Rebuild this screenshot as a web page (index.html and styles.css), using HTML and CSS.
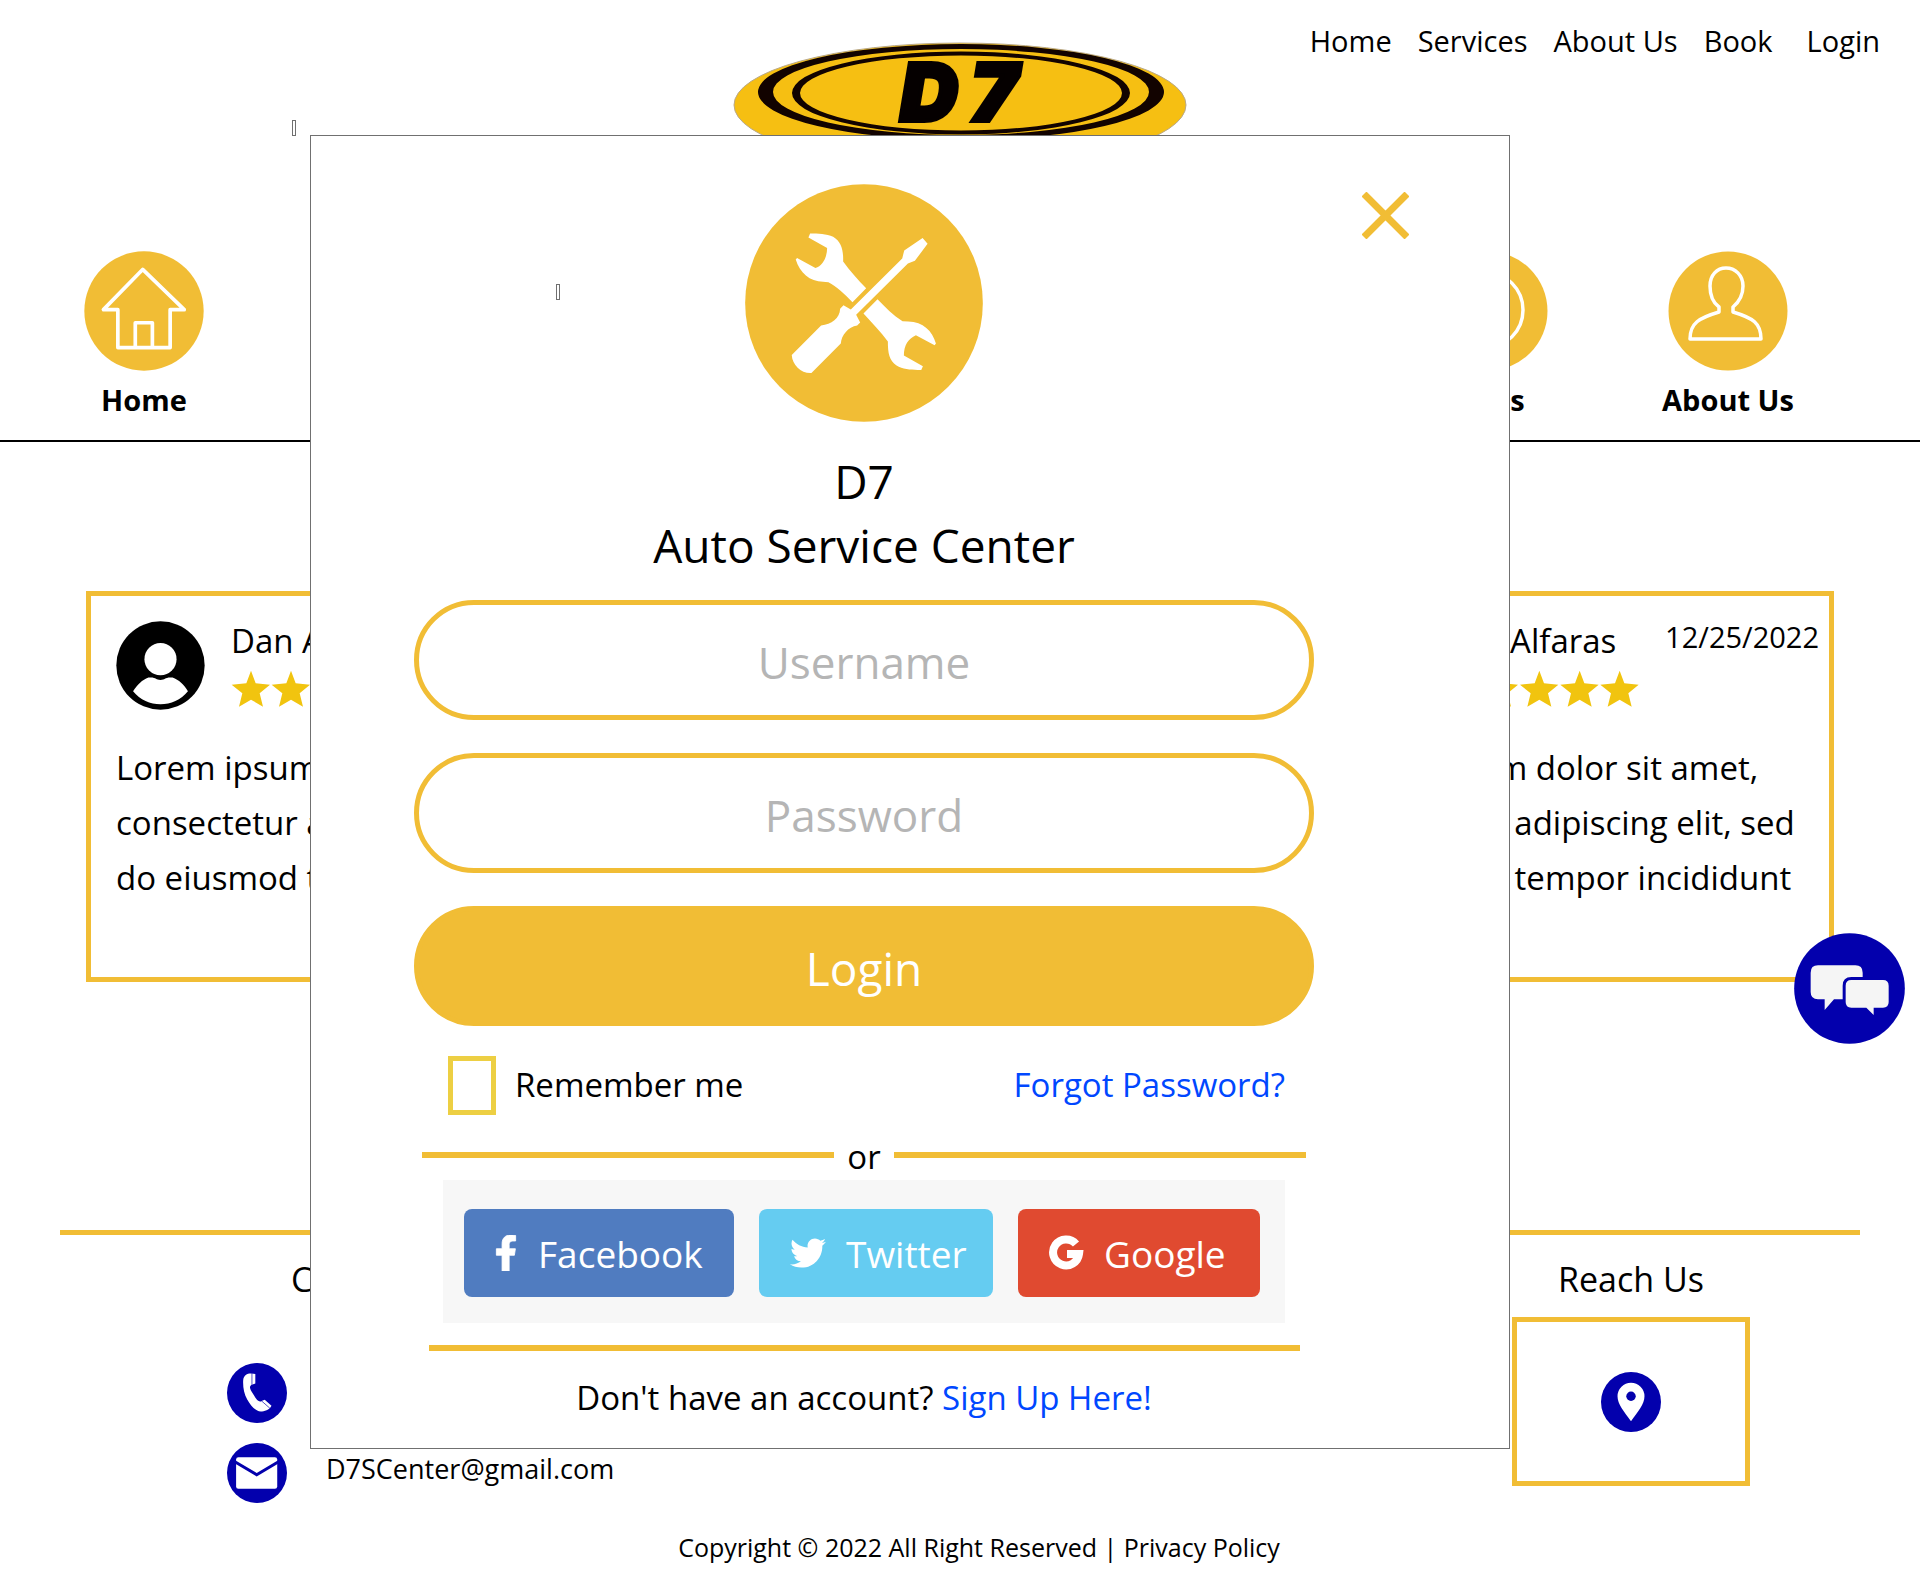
FILE: index.html
```html
<!DOCTYPE html>
<html lang="en">
<head>
<meta charset="utf-8">
<meta name="viewport" content="width=device-width, initial-scale=1">
<title>D7 Auto Service Center</title>
<link rel="stylesheet" href="styles.css">
</head>
<body>
<header class="site-header">
  <svg class="logo" viewBox="735 42 454 126" role="img" aria-label="D7">
    <ellipse cx="962" cy="105" rx="226" ry="62" fill="#f6bf12" stroke="#b9a98a" stroke-width="1"/>
    <path fill="#120300" fill-rule="evenodd" d="M760 92a203 48 0 1 0 406 0a203 48 0 1 0 -406 0ZM775 92a188 43 0 1 0 376 0a188 43 0 1 0 -376 0Z"/>
    <path fill="#120300" fill-rule="evenodd" d="M794 93a169 41.500 0 1 0 338 0a169 41.500 0 1 0 -338 0ZM802 93a161 37.500 0 1 0 322 0a161 37.500 0 1 0 -322 0Z"/>
    <text class="logo-text" y="121"><tspan x="902">D</tspan><tspan x="972">7</tspan></text>
  </svg>
  <nav class="top-nav" aria-label="Main">
    <a href="#home">Home</a>
    <a href="#services">Services</a>
    <a href="#about">About Us</a>
    <a href="#book">Book</a>
    <a class="nav-login" href="#login">Login</a>
  </nav>
</header>
<span class="marker marker-page"></span>

<nav class="quick-links" aria-label="Quick links">
  <a class="quick-link quick-home" href="#home">
    <svg class="quick-icon" viewBox="253 92 358 358" aria-hidden="true">
      <circle cx="432" cy="271" r="178" fill="#f1bd35"/>
      <path d="M428 147L311 267H354V380H510V267H552ZM406 380V306H457V380" fill="none" stroke="#fff" stroke-width="11" stroke-linejoin="round"/>
    </svg>
    <span>Home</span>
  </a>
  <a class="quick-link" href="#faqs">
    <svg class="quick-icon" viewBox="0 0 120 120" aria-hidden="true">
      <circle cx="60" cy="60" r="59.500" fill="#f1bd35"/>
      <circle cx="57" cy="59" r="38" fill="none" stroke="#fff" stroke-width="3.500"/>
    </svg>
    <span>FAQs</span>
  </a>
  <a class="quick-link" href="#about">
    <svg class="quick-icon" viewBox="0 0 120 120" aria-hidden="true">
      <circle cx="60" cy="60" r="59.500" fill="#f1bd35"/>
      <path d="M51 61V56C44 51 42 44 42 35C42 24 49 17 58 17S75 24 75 35C75 44 71 51 65 56V61C85 67 93 72 93 88H22C22 72 31 67 51 61Z" fill="none" stroke="#fff" stroke-width="3.500" stroke-linejoin="round"/>
    </svg>
    <span>About Us</span>
  </a>
</nav>

<svg class="symbols" aria-hidden="true">
  <symbol id="avatar" viewBox="167 184 266 266">
    <circle cx="300" cy="317" r="132" fill="#000"/>
    <circle cx="300" cy="298" r="48" fill="#fff"/>
    <path d="M218 394C232 374 245 360 264 353C288 351 285 360 300 360C315 360 312 351 336 353C355 360 370 374 382 394C340 446 260 446 218 394Z" fill="#fff"/>
  </symbol>
  <symbol id="stars" viewBox="0 0 600 111">
    <g fill="#f1c40f">
      <path id="star" d="M60 2L74 40L117 44L86 70L96 110L60 89L24 110L34 70L2 44L46 40Z"/>
      <use href="#star" x="120"/><use href="#star" x="241"/><use href="#star" x="362"/><use href="#star" x="482"/>
    </g>
  </symbol>
</svg>

<main class="reviews">
  <article class="review">
    <div class="review-head">
      <svg class="avatar" aria-hidden="true"><use href="#avatar"/></svg>
      <div class="review-author">
        <h2>Dan Alfaras</h2>
        <svg class="stars" role="img" aria-label="5 stars"><use href="#stars"/></svg>
      </div>
      <time datetime="2022-12-25">12/25/2022</time>
    </div>
    <p>Lorem ipsum dolor sit amet, consectetur adipiscing elit, sed do eiusmod tempor incididunt</p>
  </article>
  <article class="review">
    <div class="review-head">
      <svg class="avatar" aria-hidden="true"><use href="#avatar"/></svg>
      <div class="review-author">
        <h2>Dan Alfaras</h2>
        <svg class="stars" role="img" aria-label="5 stars"><use href="#stars"/></svg>
      </div>
      <time datetime="2022-12-25">12/25/2022</time>
    </div>
    <p>Lorem ipsum dolor sit amet, consectetur adipiscing elit, sed do eiusmod tempor incididunt</p>
  </article>
  <article class="review">
    <div class="review-head">
      <svg class="avatar" aria-hidden="true"><use href="#avatar"/></svg>
      <div class="review-author">
        <h2>Dan Alfaras</h2>
        <svg class="stars" role="img" aria-label="5 stars"><use href="#stars"/></svg>
      </div>
      <time datetime="2022-12-25">12/25/2022</time>
    </div>
    <p>Lorem ipsum dolor sit amet, consectetur adipiscing elit, sed do eiusmod tempor incididunt</p>
  </article>
</main>

<footer class="site-footer">
  <div class="footer-columns">
    <section class="contact">
      <h2>Contact Us</h2>
      <a class="contact-row" href="#phone" aria-label="Phone">
        <svg viewBox="80 429 178 178" aria-hidden="true">
          <circle cx="169" cy="518" r="89" fill="#0300ad"/>
          <path d="M128 480C129 464 142 459 153 460L164 462V490L152 494C145 499 148 506 158 522C168 540 176 548 184 541L192 538L212 556C206 569 190 573 180 573C165 572 150 555 140 537C130 520 127 500 128 480Z" fill="#fff"/>
          <path d="M154 459V494M182 541L207 563" stroke="#0300ad" stroke-width="2"/>
        </svg>
      </a>
      <a class="contact-row" href="mailto:D7SCenter@gmail.com">
        <svg viewBox="80 669 178 178" aria-hidden="true">
          <circle cx="169" cy="758" r="89" fill="#0300ad"/>
          <rect x="107" y="711" width="122" height="94" rx="7" fill="#fff"/>
          <path d="M102 724L168 763L234 724" fill="none" stroke="#0300ad" stroke-width="9"/>
        </svg>
        <span>D7SCenter@gmail.com</span>
      </a>
    </section>
    <section class="reach">
      <h2>Reach Us</h2>
      <a class="map" href="#map" aria-label="Map">
        <svg viewBox="366 486 178 178" aria-hidden="true">
          <circle cx="455" cy="575" r="89" fill="#0300ad"/>
          <path d="M455 632C435 604 415 582 415 558A40 40 0 0 1 495 558C495 582 475 604 455 632Z" fill="#fff"/>
          <circle cx="455" cy="558" r="14" fill="#0300ad"/>
        </svg>
      </a>
    </section>
  </div>
  <p class="copyright">Copyright © 2022 All Right Reserved | <a href="#privacy">Privacy Policy</a></p>
</footer>

<button class="chat" type="button" aria-label="Chat">
  <svg viewBox="943 1119 333 333" aria-hidden="true">
    <circle cx="1109.500" cy="1285.500" r="166" fill="#0300ad"/>
    <path d="M1015 1216H1127Q1149 1216 1149 1238V1318H1063L1035 1350V1318H1015Q993 1318 993 1296V1238Q993 1216 1015 1216Z" fill="#f5f5f5"/>
    <path d="M1115 1260H1210Q1227 1260 1227 1277V1326Q1227 1343 1210 1343H1182V1365L1160 1343H1115Q1098 1343 1098 1326V1277Q1098 1260 1115 1260Z" fill="#f5f5f5" stroke="#0300ad" stroke-width="18" paint-order="stroke"/>
  </svg>
</button>

<div class="modal" role="dialog" aria-labelledby="login-title">
  <button class="close" type="button" aria-label="Close">
    <svg viewBox="0 0 47 47" aria-hidden="true"><path d="M2 2L45 45M45 2L2 45" stroke="#f1bd35" stroke-width="7"/></svg>
  </button>
  <span class="marker marker-modal"></span>
  <form class="login">
    <svg class="tools" viewBox="136 492 713 713" aria-hidden="true">
      <circle cx="492.500" cy="848.500" r="356" fill="#f1bd35"/>
      <g fill="#fff">
        <path d="M331 640L326 652L382 684C382 712 368 738 347 744L292 714L288 718C300 758 330 784 370 785L386 786C410 798 435 822 458 846L499 804C475 780 450 752 430 724C431 690 425 665 400 650C380 641 355 640 331 640Z"/>
        <path d="M668 654L683 671L645 722L624 730L469 884L481 907L472 916C445 920 425 945 423 970L335 1058C305 1060 278 1035 276 1004L364 916C395 912 420 895 421 866L431 855L453 868L607 715L613 691Z"/>
        <path d="M533 837L491 880C515 906 543 935 564 964C564 1000 568 1020 590 1036C610 1048 640 1050 664 1049L669 1038L612 1006C612 975 625 955 648 945L704 975L708 970C697 932 670 905 625 904L608 903C580 885 555 860 533 837Z"/>
      </g>
    </svg>
    <h1 id="login-title">D7<br>Auto Service Center</h1>
    <div class="fields">
      <input class="field" type="text" placeholder="Username" aria-label="Username">
      <input class="field" type="password" placeholder="Password" aria-label="Password">
      <button class="submit" type="submit">Login</button>
    </div>
    <div class="options">
      <input class="remember" type="checkbox" id="remember">
      <label for="remember">Remember me</label>
      <a class="forgot" href="#forgot">Forgot Password?</a>
    </div>
    <div class="divider"><span>or</span></div>
    <div class="social">
      <button class="social-btn facebook" type="button">
        <svg viewBox="22 0 276 512" aria-hidden="true"><path fill="#fff" stroke="#fff" stroke-width="12" d="M279.140 288l14.220-92.660h-88.910v-60.130c0-25.350 12.420-50.060 52.240-50.060h40.420V6.260S260.430 0 225.360 0c-73.220 0-121.080 44.380-121.080 124.720v70.620H22.890V288h81.390v224h100.170V288z"/></svg>
        Facebook
      </button>
      <button class="social-btn twitter" type="button">
        <svg viewBox="0 0 512 512" aria-hidden="true"><path fill="#fff" d="M459.370 151.716c.325 4.548.325 9.097.325 13.645 0 138.720-105.583 298.558-298.558 298.558-59.452 0-114.680-17.219-161.137-47.106 8.447.974 16.568 1.299 25.340 1.299 49.055 0 94.213-16.568 130.274-44.832-46.132-.975-84.792-31.188-98.112-72.772 6.498.974 12.995 1.624 19.818 1.624 9.421 0 18.843-1.300 27.614-3.573-48.081-9.747-84.143-51.980-84.143-102.985v-1.299c13.969 7.797 30.214 12.670 47.431 13.319-28.264-18.843-46.781-51.005-46.781-87.391 0-19.492 5.197-37.360 14.294-52.954 51.655 63.675 129.300 105.258 216.365 109.807-1.624-7.797-2.599-15.918-2.599-24.040 0-57.828 46.782-104.934 104.934-104.934 30.213 0 57.502 12.670 76.670 33.137 23.715-4.548 46.456-13.320 66.599-25.340-7.798 24.366-24.366 44.833-46.132 57.827 21.117-2.273 41.584-8.122 60.426-16.243-14.292 20.791-32.161 39.308-52.628 54.253z"/></svg>
        Twitter
      </button>
      <button class="social-btn google" type="button">
        <svg viewBox="0 0 35 35" aria-hidden="true"><path fill="none" stroke="#fff" stroke-width="8" d="M27 8.500A13 13 0 1 0 30 18.500H18"/></svg>
        Google
      </button>
    </div>
    <hr class="rule">
    <p class="signup">Don't have an account? <a href="#signup">Sign Up Here!</a></p>
  </form>
</div>
</body>
</html>
```
FILE: styles.css
```css
* {
  box-sizing: border-box;
}

body {
  position: relative;
  margin: 0;
  background: #fff;
  color: #000;
  font-family: "Open Sans", "Noto Sans", sans-serif;
  font-size: 29px;
}

a {
  color: inherit;
  text-decoration: none;
}

h1,
h2,
p {
  margin: 0;
  font-weight: 400;
}

button,
input {
  font-family: inherit;
}

svg {
  display: block;
}

.symbols {
  position: absolute;
  width: 0;
  height: 0;
}

.site-header {
  display: grid;
  padding-bottom: 83px;
}

.logo {
  grid-area: 1 / 1;
  justify-self: center;
  width: 454px;
  height: 126px;
  margin-top: 42px;
}

.logo-text {
  fill: #050000;
  stroke: #050000;
  stroke-width: 4px;
  font-family: Inter, sans-serif;
  font-size: 80px;
  font-style: italic;
  font-weight: 900;
}

.top-nav {
  grid-area: 1 / 1;
  justify-self: end;
  align-self: start;
  display: flex;
  gap: 26px;
  padding: 21px 40px 0 0;
  line-height: 40px;
}

.nav-login {
  margin-left: 8px;
}

/* Small empty glyph boxes left on the page and in the dialog */
.marker {
  position: absolute;
  width: 4px;
  height: 16px;
  border: 1px solid #707070;
}

.marker-page {
  top: 120px;
  left: 292px;
}

.marker-modal {
  top: 148px;
  left: 245px;
}

.quick-links {
  display: flex;
  gap: 104px;
  padding: 0 124px 20px 76px;
  border-bottom: 2px solid #000;
}

.quick-link {
  display: flex;
  flex-direction: column;
  align-items: center;
  gap: 9px;
  width: 136px;
  font-weight: 700;
  line-height: 40px;
  white-space: nowrap;
}

.quick-home {
  margin-right: auto;
}

.quick-icon {
  width: 120px;
  height: 120px;
}

.reviews {
  display: grid;
  grid-template-columns: repeat(3, 1fr);
  gap: 64px;
  padding: 149px 86px 0;
}

.review {
  padding: 20px 10px 72px 25px;
  border: 5px solid #f1bd35;
}

.review-head {
  display: flex;
}

.avatar {
  flex: none;
  width: 89px;
  height: 89px;
  margin-top: 5px;
}

.review-author {
  flex: 1;
  padding-left: 26px;
}

.review-author h2 {
  font-size: 33px;
  line-height: 50px;
}

.stars {
  width: 200px;
  height: 37px;
  margin-top: 4px;
}

.review-head time {
  line-height: 42px;
}

.review p {
  margin-top: 30px;
  font-size: 33px;
  line-height: 55px;
}

.site-footer {
  margin: 248px 60px 0;
  border-top: 5px solid #f1bd35;
}

.footer-columns {
  display: flex;
  justify-content: space-between;
  padding: 22px 110px 0 167px;
}

.footer-columns h2 {
  font-size: 34px;
  line-height: 44px;
}

.contact {
  display: flex;
  flex-direction: column;
  gap: 20px;
}

.contact h2 {
  margin-bottom: 42px;
  padding-left: 64px;
}

.contact-row {
  display: flex;
  gap: 39px;
  font-size: 27px;
  line-height: 52px;
}

.contact-row svg,
.map svg {
  width: 60px;
  height: 60px;
}

.reach {
  text-align: center;
}

.map {
  display: flex;
  align-items: center;
  justify-content: center;
  width: 238px;
  height: 169px;
  margin-top: 16px;
  border: 5px solid #f1bd35;
}

.copyright {
  padding: 27px 0 20px 38px;
  font-size: 25px;
  line-height: 34px;
  text-align: center;
}

.chat {
  position: absolute;
  top: 933px;
  right: 15px;
  width: 111px;
  height: 111px;
  padding: 0;
  border: 0;
  border-radius: 50%;
  background: none;
}

.modal {
  position: absolute;
  top: 135px;
  left: 310px;
  width: 1200px;
  padding: 48px 195px 28px 103px;
  border: 1px solid #707070;
  background: #fff;
}

.close {
  position: absolute;
  top: 56px;
  right: 100px;
  width: 47px;
  height: 47px;
  padding: 0;
  border: 0;
  background: none;
}

.tools {
  width: 238px;
  height: 238px;
  margin: 0 auto 27px;
}

.login h1 {
  font-size: 46px;
  line-height: 64px;
  text-align: center;
}

.fields {
  display: flex;
  flex-direction: column;
  gap: 33px;
  margin-top: 23px;
}

.field,
.submit {
  width: 100%;
  height: 120px;
  padding: 4px 40px 0;
  border: 5px solid #f1bd35;
  border-radius: 60px;
  background: #fff;
  font-size: 46px;
  text-align: center;
}

.field {
  font-size: 44px;
}

.field::placeholder {
  color: #b5b5b5;
  opacity: 1;
}

.submit {
  background: #f1bd35;
  color: #fff;
}

.options {
  display: flex;
  align-items: center;
  margin-top: 30px;
  padding: 0 29px 0 34px;
  font-size: 33px;
  line-height: 40px;
}

.options label,
.forgot {
  padding-bottom: 2px;
}

.remember {
  appearance: none;
  width: 48px;
  height: 59px;
  margin: 0 19px 0 0;
  border: 5px solid #edcf43;
}

.forgot {
  margin-left: auto;
}

.forgot,
.signup a {
  color: #0047ff;
}

.divider {
  display: flex;
  align-items: center;
  gap: 13px;
  margin-top: 22px;
  padding: 0 8px;
  font-size: 33px;
  line-height: 36px;
}

.divider span {
  padding-top: 2px;
  margin-bottom: -2px;
}

.divider::before,
.divider::after {
  content: "";
  flex: 1;
  height: 6px;
  background: #f1bd35;
}

.social {
  display: flex;
  gap: 25px;
  margin: 7px 29px 0;
  padding: 29px 25px 26px 21px;
  background: #f7f7f7;
}

.social-btn {
  display: flex;
  align-items: center;
  height: 88px;
  padding: 0 0 0 31px;
  border: 0;
  border-radius: 8px;
  color: #fff;
  font-size: 37px;
}

.social-btn svg {
  height: 36px;
}

.facebook {
  width: 270px;
  gap: 21px;
  background: #507cc0;
}

.facebook svg {
  width: 22px;
}

.twitter {
  width: 234px;
  gap: 20px;
  background: #65ccf1;
}

.twitter svg {
  width: 36px;
}

.google {
  width: 242px;
  gap: 20px;
  background: #e04a30;
}

.google svg {
  width: 35px;
}

.rule {
  height: 6px;
  margin: 22px 14px 25px 15px;
  border: 0;
  background: #f1bd35;
}

.signup {
  font-size: 33px;
  line-height: 44px;
  text-align: center;
}
```
